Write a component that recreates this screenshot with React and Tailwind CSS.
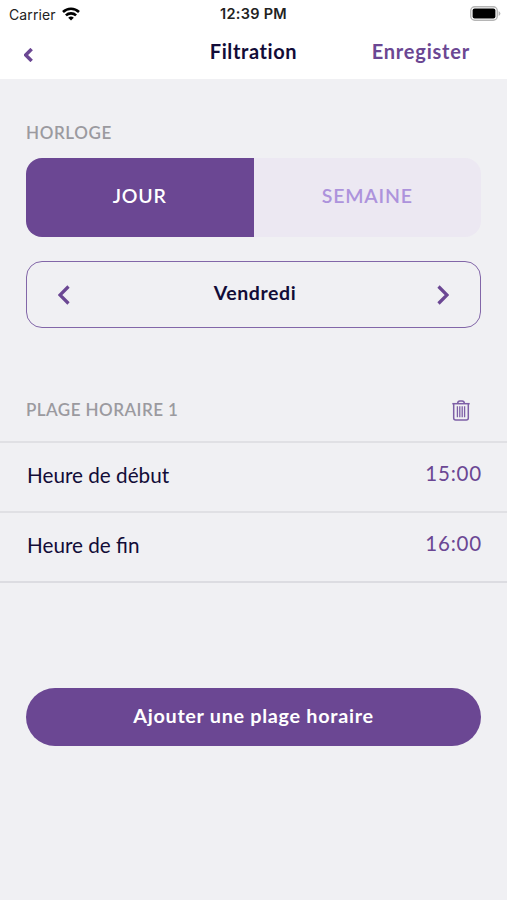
import React, { useState } from 'react';

const DAYS = ['Lundi', 'Mardi', 'Mercredi', 'Jeudi', 'Vendredi', 'Samedi', 'Dimanche'];

const Chevron = ({ className, flip, strokeWidth = 3.2 }) => (
    <svg viewBox="0 0 12 20" className={className} fill="none" stroke="#6b4793" strokeWidth={strokeWidth}>
        <path d={flip ? 'M1.5 1.5 L10 10 L1.5 18.5' : 'M10.5 1.5 L2 10 L10.5 18.5'} />
    </svg>
);

const Wifi = () => (
    <svg viewBox="0 0 18 14" className="w-[18px] h-[14px]" fill="none" stroke="#000" strokeWidth="2.6">
        <path d="M1 5 A11.5 11.5 0 0 1 17 5" />
        <path d="M3.9 8.4 A7.4 7.4 0 0 1 14.1 8.4" />
        <path d="M9 13.4 L6.2 10.8 A4 4 0 0 1 11.8 10.8 Z" fill="#000" stroke="none" />
    </svg>
);

const Battery = () => (
    <svg viewBox="0 0 31 15" className="w-[31px] h-[15px]">
        <rect x="0.75" y="0.75" width="26.5" height="13.5" rx="4" fill="#fff" stroke="#b5b5b5" strokeWidth="1.4" />
        <rect x="2.6" y="2.6" width="22.8" height="9.8" rx="2" fill="#000" />
        <path d="M28.6 5 Q30.4 6 30.4 7.5 Q30.4 9 28.6 10 Z" fill="#b5b5b5" />
    </svg>
);

const Trash = () => (
    <svg viewBox="0 0 18 21" className="w-[18px] h-[21px]" fill="none" stroke="#7d5fa6" strokeWidth="1.5">
        <path d="M0.3 3.7 H17.7" />
        <path d="M5.6 3.4 C5.8 1.6 6.6 0.9 7.8 0.9 H10.2 C11.4 0.9 12.2 1.6 12.4 3.4" />
        <path d="M1.7 4 V18 Q1.7 20 3.7 20 H14.3 Q16.3 20 16.3 18 V4" />
        <path d="M5.4 6.3 V17.3 M7.8 6.3 V17.3 M10.2 6.3 V17.3 M12.6 6.3 V17.3" strokeWidth="1.3" />
    </svg>
);

const App = () => {
    const [mode, setMode] = useState('day');
    const [day, setDay] = useState(4);

    const rows = [
        { label: 'Heure de début', value: '15:00' },
        { label: 'Heure de fin', value: '16:00' },
    ];

    const tabClass = (active) =>
        active ? 'bg-[#6b4793] text-white' : 'bg-[#ece8f2] text-[#ad93dc]';

    return (
        <div className="w-full h-screen overflow-hidden bg-[#f0f0f3] font-['Lato',sans-serif] text-[#120c38]">
            <header className="h-[79px] bg-white">
                <div className="grid grid-cols-3 items-center h-[27px] pl-[9px] pr-[9px] font-['Inter',sans-serif] text-[#222]">
                    <div className="flex items-center gap-[6px] text-[14px] tracking-[0.1px]">
                        <span className="pt-px">Carrier</span>
                        <Wifi />
                    </div>
                    <span className="text-center text-[14.5px] font-semibold tracking-[0.3px] whitespace-nowrap">12:39 PM</span>
                    <div className="flex justify-end -mr-[3px]"><Battery /></div>
                </div>
                <div className="grid grid-cols-3 items-center h-[48px] pl-[24px] pr-[37px]">
                    <button className="pt-[8px] w-[10px]">
                        <Chevron className="w-[9px] h-[14px]" strokeWidth={5} />
                    </button>
                    <h1 className="text-center text-[20px] font-bold tracking-[0.6px] pl-[13px] whitespace-nowrap">Filtration</h1>
                    <button className="text-right text-[20px] font-bold tracking-[0.8px] text-[#6b4793]">Enregister</button>
                </div>
            </header>

            <section className="px-[26px] pt-[42px]">
                <h2 className="text-[17px] leading-6 font-semibold tracking-[0.6px] text-[#9b9a9f]">HORLOGE</h2>
                <div className="grid grid-cols-2 h-[79px] mt-[13px] rounded-[16px] overflow-hidden text-[19.5px] font-semibold tracking-[0.8px]">
                    <button onClick={() => setMode('day')} className={`pb-[3px] ${tabClass(mode === 'day')}`}>JOUR</button>
                    <button onClick={() => setMode('week')} className={`pb-[3px] ${tabClass(mode === 'week')}`}>SEMAINE</button>
                </div>
                <div className="flex items-center justify-between h-[67px] mt-[24px] px-[31px] border-[1.5px] border-[#8266a8] rounded-[16px]">
                    <button onClick={() => setDay((day + 6) % 7)}>
                        <Chevron className="w-[12px] h-[20px]" />
                    </button>
                    <span className="pb-[3px] pl-[3px] text-[19.5px] font-bold tracking-[0.6px]">{DAYS[day]}</span>
                    <button onClick={() => setDay((day + 1) % 7)}>
                        <Chevron className="w-[12px] h-[20px]" flip />
                    </button>
                </div>
            </section>

            <section className="mt-[70px]">
                <div className="flex items-center justify-between h-[43px] pl-[26px] pr-[37px] pb-[19px]">
                    <h2 className="text-[17px] font-semibold tracking-[0.45px] text-[#9b9a9f]">PLAGE HORAIRE 1</h2>
                    <Trash />
                </div>
                {rows.map((row) => (
                    <div key={row.label} className="flex items-center justify-between h-[70px] pl-[27px] pr-[26px] pb-[6px] border-t-2 border-[#e0e0e4]">
                        <span className="pt-[3px] text-[20.7px]">{row.label}</span>
                        <span className="pb-[1px] -mr-[1px] text-[20.5px] tracking-[0.8px] text-[#6b4793]">{row.value}</span>
                    </div>
                ))}
                <div className="border-t-2 border-[#dcdce1]" />
            </section>

            <div className="px-[26px] mt-[105px]">
                <button className="w-full h-[58px] pb-[3px] rounded-full bg-[#6b4793] text-white text-[19.8px] font-bold tracking-[0.7px]">
                    Ajouter une plage horaire
                </button>
            </div>
        </div>
    );
};

export default App;
